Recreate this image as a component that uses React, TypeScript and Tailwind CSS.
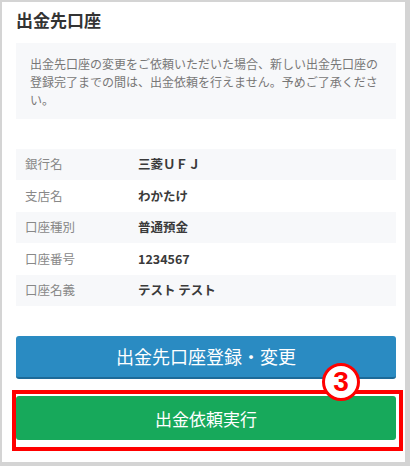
import React from "react";

const rows: [string, string][] = [
  ["銀行名", "三菱ＵＦＪ"],
  ["支店名", "わかたけ"],
  ["口座種別", "普通預金"],
  ["口座番号", "1234567"],
  ["口座名義", "テスト テスト"],
];

export default function App() {
  return (
    <div
      className="relative w-[410px] h-[466px] bg-[#d4d4d4] pt-[2px] pl-[2px] pr-[5px] pb-[4px]"
      style={{ fontFamily: '"Noto Sans CJK JP", "Noto Sans", sans-serif' }}
    >
      <div className="h-full bg-white pt-[6px] pl-[14px] flex flex-col">
        <h1 className="h-[24px] leading-[24px] text-[17px] font-bold text-[#333]">出金先口座</h1>
        <div className="mt-[10.5px] w-[380px] bg-[#f7f8fa] pt-[12px] pb-[10px] px-[14px] text-[12px] leading-[18px] text-[#777]">
          出金先口座の変更をご依頼いただいた場合、新しい出金先口座の登録完了までの間は、出金依頼を行えません。予めご了承ください。
        </div>
        <div className="mt-[30px] w-[380px] flex flex-col">
          {rows.map(([k, v], i) => (
            <div
              key={k}
              className={`h-[31.6px] flex items-center text-[12.5px] ${i % 2 === 0 ? "bg-[#f7f8fa]" : "bg-white"}`}
            >
              <div className="w-[122px] pl-[9px] text-[#888]">{k}</div>
              <div className="font-bold text-[#3a3a3a]">{v}</div>
            </div>
          ))}
        </div>
        <button className="mt-[30px] w-[380px] h-[43px] rounded-[3px] bg-[#2a8bc2] border-b-2 border-[#1d6a98] text-white text-[18px] flex items-center justify-center">
          出金先口座登録・変更
        </button>
        <button className="mt-[17px] w-[380px] h-[44px] rounded-[3px] bg-[#17a95b] text-white text-[17px] flex items-center justify-center">
          出金依頼実行
        </button>
      </div>
      <div className="absolute left-[12px] top-[390px] w-[391px] h-[61px] border-[4px] border-[#ff0000] pointer-events-none" />
      <div className="absolute left-[322px] top-[363px] w-[38px] h-[38px] rounded-full bg-white border-[3.5px] border-[#ff0000] flex items-center justify-center">
        <span
          className="text-[28px] font-bold text-[#ff0000] leading-none"
          style={{ fontFamily: '"Liberation Sans", Arial, sans-serif' }}
        >
          3
        </span>
      </div>
    </div>
  );
}
